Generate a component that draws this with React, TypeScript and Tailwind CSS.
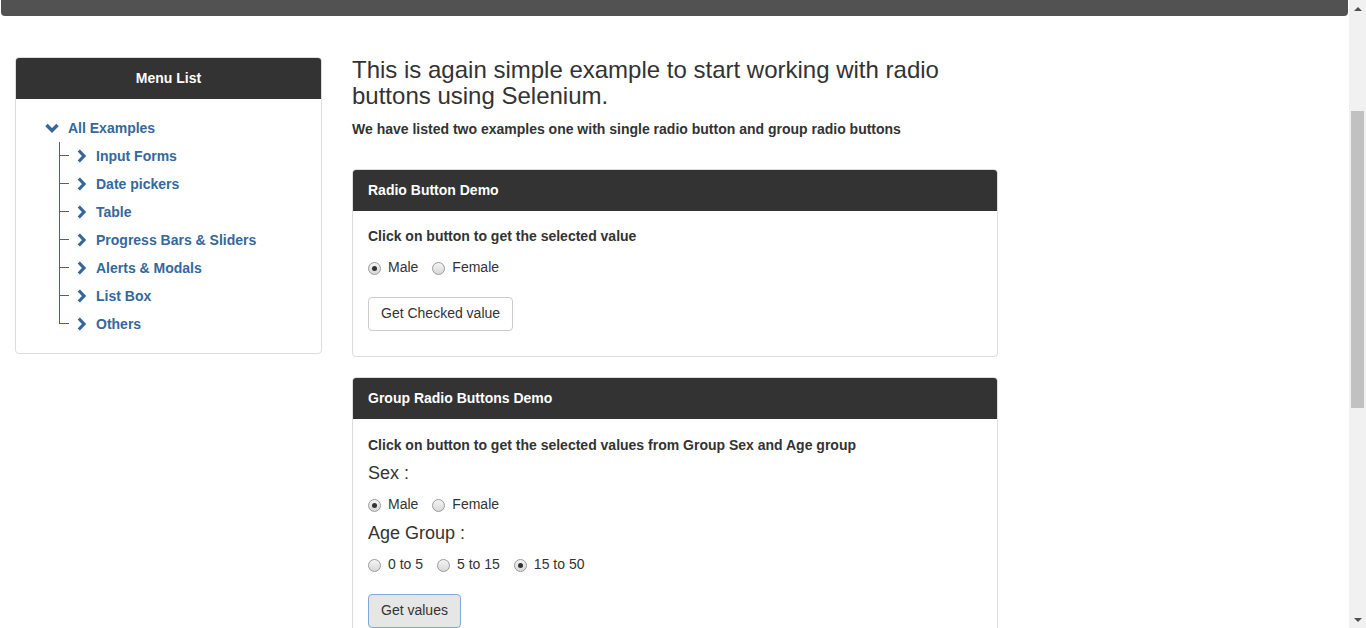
import React from "react";

const menuItems = [
  "Input Forms",
  "Date pickers",
  "Table",
  "Progress Bars & Sliders",
  "Alerts & Modals",
  "List Box",
  "Others",
];

function ChevronDown() {
  return (
    <svg width="14" height="10" viewBox="0 0 14 10" className="shrink-0">
      <path d="M1.5 2 L7 7.5 L12.5 2" fill="none" stroke="#34689c" strokeWidth="3.4" strokeLinejoin="miter" />
    </svg>
  );
}

function ChevronRight() {
  return (
    <svg width="9" height="14" viewBox="0 0 9 14" className="shrink-0">
      <path d="M1.8 1.5 L7 7 L1.8 12.5" fill="none" stroke="#34689c" strokeWidth="3.2" strokeLinejoin="miter" />
    </svg>
  );
}

function Radio({ label, checked }: { label: string; checked?: boolean }) {
  return (
    <label className="relative flex items-center pl-[20px] h-[20px] text-[14px] text-[#333]">
      <span className="absolute left-0 top-[4px] w-[13px] h-[13px] rounded-full border border-[#9a9a9a] bg-gradient-to-b from-[#f4f4f4] to-[#d8d8d8] flex items-center justify-center">
        {checked && <span className="w-[5px] h-[5px] rounded-full bg-[#333]" />}
      </span>
      {label}
    </label>
  );
}

function PanelHeader({ title }: { title: string }) {
  return (
    <div className="h-[41px] bg-[#333] px-[15px] flex items-center text-white text-[14px] font-bold">
      {title}
    </div>
  );
}

export default function App() {
  return (
    <div className="h-[628px] w-[1366px] flex overflow-hidden bg-white font-['Liberation_Sans',Arial,sans-serif] text-[#333]">
      <div className="flex-1 flex flex-col">
        {/* navbar, scrolled mostly out of view */}
        <div className="h-[16px] mx-px bg-[#525252] rounded-b-[4px] shrink-0" />

        <div className="flex pt-[41px] pl-[15px]">
          {/* left menu */}
          <div className="w-[307px] self-start border border-[#ddd] rounded-[4px] overflow-hidden">
            <div className="h-[41px] bg-[#333] flex items-center justify-center text-white text-[14px] font-bold">
              Menu List
            </div>
            <div className="pt-[15px] pb-[15px] pl-[29px] text-[14px] font-bold text-[#34689c]">
              <div className="h-[28px] flex items-center">
                <ChevronDown />
                <span className="ml-[9px]">All Examples</span>
              </div>
              <ul className="ml-[14px]">
                {menuItems.map((item, i) => (
                  <li key={item} className="h-[28px] flex items-stretch">
                    <div className="w-[10px] flex flex-col">
                      <div className="h-[14px] border-l border-b border-[#34689c]" />
                      <div className={i === menuItems.length - 1 ? "flex-1" : "flex-1 border-l border-[#34689c]"} />
                    </div>
                    <div className="flex items-center ml-[8px]">
                      <ChevronRight />
                      <span className="ml-[10px]">{item}</span>
                    </div>
                  </li>
                ))}
              </ul>
            </div>
          </div>

          {/* main column */}
          <div className="w-[646px] ml-[30px]">
            <h3 className="text-[24px] leading-[1.1] font-normal text-[#333]">
              This is again simple example to start working with radio buttons using Selenium.
            </h3>
            <p className="mt-[9px] text-[14px] leading-[20px] font-bold">
              We have listed two examples one with single radio button and group radio buttons
            </p>

            <div className="mt-[30px] border border-[#ddd] rounded-[4px] overflow-hidden">
              <PanelHeader title="Radio Button Demo" />
              <div className="pt-[15px] px-[15px] pb-[25px]">
                <p className="text-[14px] leading-[20px] font-bold">Click on button to get the selected value</p>
                <div className="mt-[12px] flex gap-[14px]">
                  <Radio label="Male" checked />
                  <Radio label="Female" />
                </div>
                <button className="mt-[19px] h-[34px] px-[12px] border border-[#ccc] rounded-[4px] bg-white text-[14px] text-[#333]">
                  Get Checked value
                </button>
              </div>
            </div>

            <div className="mt-[20px] border border-[#ddd] rounded-[4px] overflow-hidden">
              <PanelHeader title="Group Radio Buttons Demo" />
              <div className="pt-[16px] px-[15px] pb-[25px]">
                <p className="text-[14px] leading-[20px] font-bold">
                  Click on button to get the selected values from Group Sex and Age group
                </p>
                <div className="mt-[8px] text-[18px] leading-[20px]">Sex :</div>
                <div className="mt-[12px] flex gap-[14px]">
                  <Radio label="Male" checked />
                  <Radio label="Female" />
                </div>
                <div className="mt-[8px] text-[18px] leading-[20px]">Age Group :</div>
                <div className="mt-[12px] flex gap-[14px]">
                  <Radio label="0 to 5" />
                  <Radio label="5 to 15" />
                  <Radio label="15 to 50" checked />
                </div>
                <button className="mt-[19px] h-[34px] px-[12px] border border-[#7fa8dc] rounded-[4px] bg-[#e6e6e6] text-[14px] text-[#333]">
                  Get values
                </button>
              </div>
            </div>
          </div>
        </div>
      </div>

      {/* fake scrollbar */}
      <div className="w-[17px] bg-[#f1f1f1] flex flex-col items-center shrink-0">
        <div className="h-[17px] flex items-center justify-center">
          <svg width="8" height="4" viewBox="0 0 8 4">
            <path d="M0 4 L4 0 L8 4 Z" fill="#505050" />
          </svg>
        </div>
        <div className="mt-[94px] w-[13px] h-[297px] bg-[#c1c1c1]" />
        <div className="flex-1" />
        <div className="h-[17px] flex items-center justify-center">
          <svg width="8" height="4" viewBox="0 0 8 4">
            <path d="M0 0 L8 0 L4 4 Z" fill="#505050" />
          </svg>
        </div>
      </div>
    </div>
  );
}
